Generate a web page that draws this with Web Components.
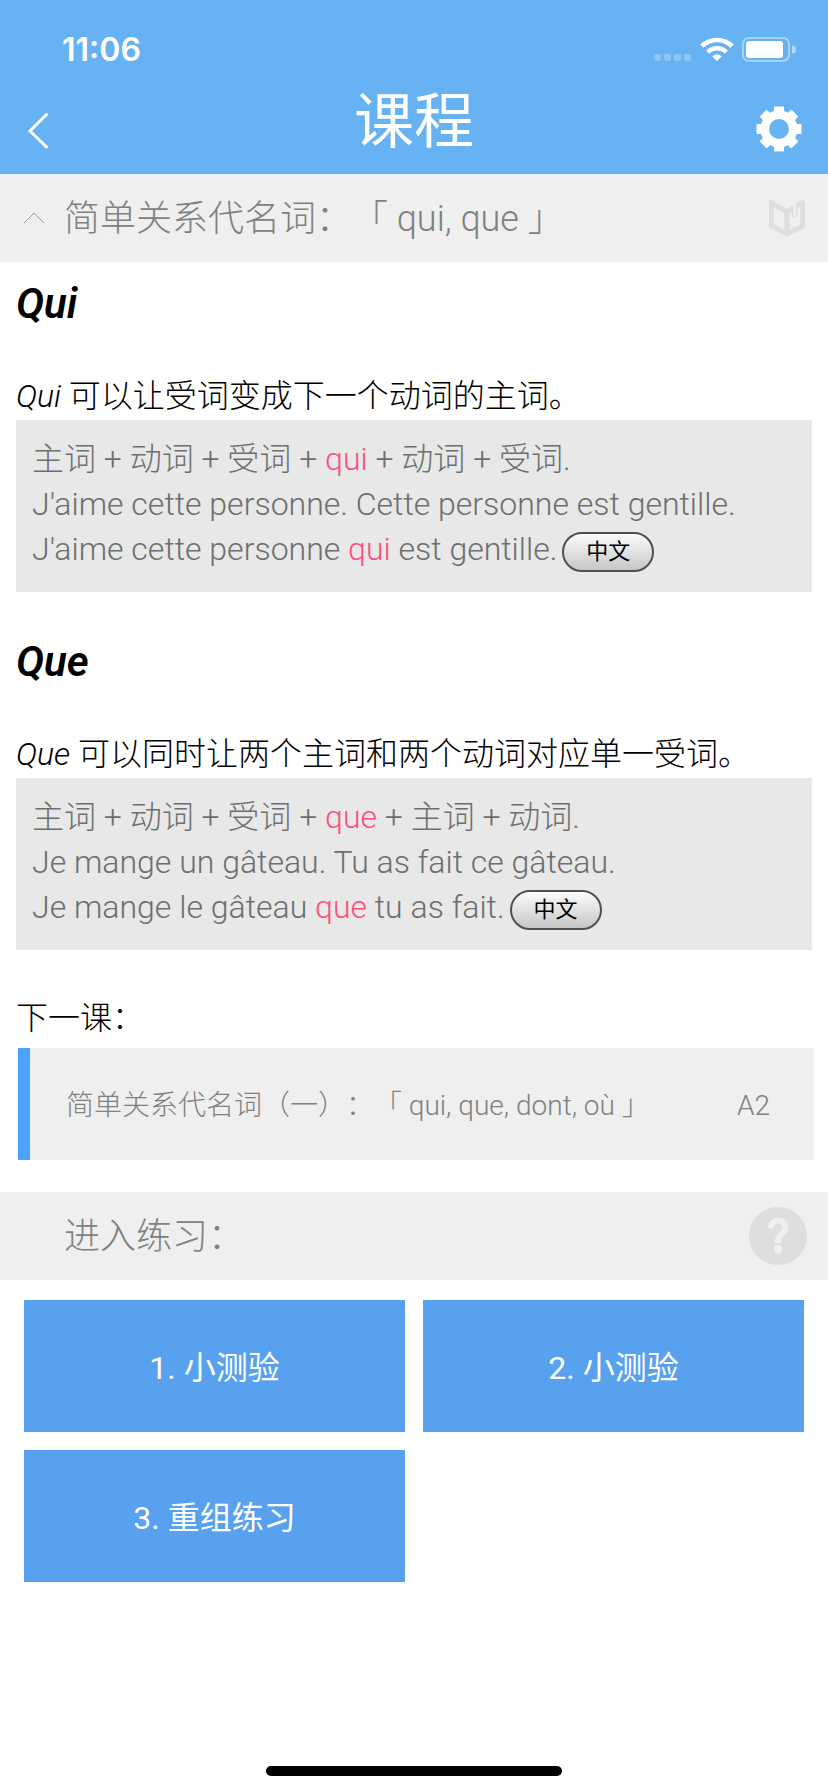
<!DOCTYPE html>
<html lang="zh-CN">
<head>
<meta charset="utf-8">
<meta name="viewport" content="width=device-width, initial-scale=1">
<title>课程</title>
<style>
  body {
    margin: 0;
    background: #fff;
    color: #000;
    font-family: Roboto, "Noto Sans CJK SC", sans-serif;
    font-weight: 300;
    font-size: 32px;
    text-spacing-trim: space-all;
  }
</style>
</head>
<body>
<lesson-app></lesson-app>

<script>
const define = (name, html) => {
  const template = document.createElement('template');
  template.innerHTML = html;
  customElements.define(name, class extends HTMLElement {
    constructor() {
      super();
      this.attachShadow({ mode: 'open' }).append(template.content.cloneNode(true));
    }
  });
};

define('status-bar', `
  <style>
    :host { display: flex; align-items: center; justify-content: space-between; height: 84px; padding: 14px 32px 0 62px; box-sizing: border-box; color: #fff; }
    time { padding-top: 2px; font: 600 32px/38px Inter, sans-serif; }
    .icons { display: flex; align-items: center; gap: 8px; }
    svg { display: block; }
  </style>
  <time>11:06</time>
  <div class="icons">
    <svg width="38" height="26" viewBox="0 0 38 26" fill="#fff" fill-opacity=".25" aria-hidden="true">
      <rect x="0" y="18" width="7" height="7" rx="2"/><rect x="10" y="18" width="7" height="7" rx="2"/>
      <rect x="20" y="18" width="7" height="7" rx="2"/><rect x="30" y="18" width="7" height="7" rx="2"/>
    </svg>
    <svg width="34" height="26" viewBox="0 0 34 26" fill="none" aria-hidden="true">
      <path d="M1.8 10.2C10.2 1.9 23.8 1.9 32.2 10.2" stroke="#fff" stroke-width="4.6"/>
      <path d="M7.7 16.1C13 11 21 11 26.3 16.1" stroke="#fff" stroke-width="4.4"/>
      <path d="M12.3 20.4C15 18 19 18 21.700 20.400L17 25Z" fill="#fff"/>
    </svg>
    <svg width="54" height="26" viewBox="0 0 54 26" aria-hidden="true">
      <rect x="1" y="2" width="46" height="23" rx="6" fill="none" stroke="#fff" stroke-opacity=".42" stroke-width="2"/>
      <rect x="4" y="5" width="37" height="17" rx="3" fill="#fff"/>
      <path d="M50 9.500a4 4 0 0 1 0 8Z" fill="#fff" fill-opacity=".5"/>
    </svg>
  </div>`);

define('nav-bar', `
  <style>
    :host { display: grid; grid-template-columns: 96px 1fr 96px; align-items: center; height: 90px; color: #fff; }
    h1 { margin: 0; padding-bottom: 12px; text-align: center; font-size: 60px; line-height: 72px; font-weight: 400; }
    button { border: 0; margin: 0; padding: 0; background: none; display: flex; height: 90px; align-items: center; }
    .back { padding-left: 24px; }
    .settings { justify-content: flex-end; padding-right: 24px; }
    svg { display: block; }
  </style>
  <button class="back" aria-label="返回">
    <svg width="28" height="40" viewBox="0 0 28 40" fill="none" stroke="#fff" stroke-width="3" stroke-linecap="round" stroke-linejoin="miter"><path d="M22.500 5.500L6 22L22.500 38"/></svg>
  </button>
  <h1><slot></slot></h1>
  <button class="settings" aria-label="设置">
    <svg width="50" height="50" viewBox="-25 -25 50 50">
      <path fill="none" stroke="#fff" stroke-width="8.500" d="M14.200 0A14.200 14.200 0 1 1 -14.200 0A14.200 14.200 0 1 1 14.200 0Z"/>
      <g fill="#fff" id="teeth"></g>
    </svg>
  </button>`);

define('section-bar', `
  <style>
    :host { display: flex; align-items: center; height: 88px; background: #efefef; color: #808080; }
    .lead { flex: none; width: 64px; display: flex; padding-left: 23px; box-sizing: border-box; }
    h2 { flex: 1; margin: 0; padding-top: 2px; font-size: 36px; line-height: 48px; font-weight: 300; white-space: nowrap; }
    .end { display: flex; }
  </style>
  <div class="lead"><slot name="lead"></slot></div>
  <h2><slot></slot></h2>
  <div class="end"><slot name="end"></slot></div>`);

define('icon-button', `
  <style>
    :host { display: block; }
    button { display: block; border: 0; margin: 0; padding: 0; background: none; }
    ::slotted(svg) { display: block; }
  </style>
  <button><slot></slot></button>`);

define('pill-button', `
  <style>
    :host { display: inline-block; margin-left: 5px; vertical-align: middle; line-height: 0; }
    button {
      box-sizing: border-box; width: 92px; height: 40px; margin: 0; padding: 0;
      border: 2px solid #505050; border-radius: 20px;
      background: linear-gradient(#fcfcfc, #c6c6c6); color: #000;
      font: 400 22px/36px Roboto, "Noto Sans CJK SC", sans-serif;
    }
  </style>
  <button><slot></slot></button>`);

define('grammar-rule', `
  <style>
    :host { display: block; padding: 0 16px; }
    h3 { margin: 0 0 44px; font-size: 42px; line-height: 48px; font-weight: 600; font-style: italic; }
    p { margin: 0; line-height: 48px; }
    .example { box-sizing: border-box; padding: 17px 16px 20px; background: #e8e8e8; color: #6e6e6e; line-height: 45px; }
  </style>
  <h3><slot name="title"></slot></h3>
  <p><slot name="rule"></slot></p>
  <div class="example"><slot></slot></div>`);

define('example-line', `
  <style>
    :host { display: block; height: 45px; white-space: nowrap; }
    ::slotted(b) { font-weight: 300; color: #ff4d79; }
  </style>
  <slot></slot>`);

define('next-lesson', `
  <style>
    :host { display: block; padding: 0 14px 0 16px; }
    p { margin: 0 0 6px; line-height: 48px; }
    a {
      display: flex; align-items: center; justify-content: space-between; box-sizing: border-box;
      height: 112px; margin-left: 2px; padding: 4px 44px 0 36px; border-left: 12px solid #4da3ff;
      background: #efefef; color: #808080; font-size: 28px; line-height: 36px; text-decoration: none; white-space: nowrap;
    }
  </style>
  <p><slot name="label"></slot></p>
  <a href="#next"><span><slot></slot></span><span><slot name="level"></slot></span></a>`);

define('exercise-grid', `
  <style>
    :host { display: grid; grid-template-columns: 1fr 1fr; gap: 18px; padding: 20px 24px; }
  </style>
  <slot></slot>`);

define('exercise-tile', `
  <style>
    :host { display: block; }
    button {
      display: block; width: 100%; height: 132px; margin: 0; padding: 4px 0 0; border: 0; background: #57a1ee; color: #fff;
      font: 400 32px/40px Roboto, "Noto Sans CJK SC", sans-serif;
    }
  </style>
  <button><slot></slot></button>`);

define('home-indicator', `
  <style>
    :host { display: flex; justify-content: center; padding-bottom: 16px; }
    div { width: 296px; height: 10px; border-radius: 5px; background: #000; }
  </style>
  <div></div>`);

define('lesson-app', `
  <style>
    :host { display: flex; flex-direction: column; min-height: 100vh; }
    header { background: #67b2f2; }
    .lesson { display: flex; flex-direction: column; gap: 46px; padding: 18px 0 32px; }
    next-lesson { margin-top: -2px; }
    .book { padding-right: 22px; }
    .help { padding-right: 20px; }
    home-indicator { margin-top: auto; }
  </style>
  <header>
    <status-bar></status-bar>
    <nav-bar>课程</nav-bar>
  </header>
  <main>
    <section-bar>
      <svg slot="lead" width="22" height="14" viewBox="0 0 22 14" fill="none" stroke="#999" stroke-width="1"><path d="M1 12L11 2L21 12"/></svg>
      简单关系代名词：「 qui, que 」
      <icon-button slot="end" class="book">
        <svg width="38" height="38" viewBox="0 0 38 38" role="img" aria-label="词典">
          <path fill="#dedede" fill-rule="evenodd" d="M1 3.500Q1 .2 4.200 1.300L19 10L33.800 1.300Q37 .2 37 3.500V27Q37 28.500 35.500 29.500L19 37.500L2.500 29.500Q1 28.500 1 27ZM5.700 7.700V25L16.300 31V14.300ZM21.700 14.300V31L32.300 25V7.700L29.500 9.300V15.500Q29.500 18.300 26.700 18.300Q24 18.300 24 15.500V12.800Z"/>
          <path fill="#efefef" d="M25.300 6H28.200V15.500Q28.200 17 26.700 17Q25.300 17 25.300 15.500Z"/>
        </svg>
      </icon-button>
    </section-bar>

    <div class="lesson">
      <grammar-rule>
        <span slot="title">Qui</span>
        <span slot="rule"><i>Qui</i> 可以让受词变成下一个动词的主词。</span>
        <example-line>主词 + 动词 + 受词 + <b>qui</b> + 动词 + 受词.</example-line>
        <example-line>J'aime cette personne. Cette personne est gentille.</example-line>
        <example-line>J'aime cette personne <b>qui</b> est gentille.<pill-button>中文</pill-button></example-line>
      </grammar-rule>

      <grammar-rule>
        <span slot="title">Que</span>
        <span slot="rule"><i>Que</i> 可以同时让两个主词和两个动词对应单一受词。</span>
        <example-line>主词 + 动词 + 受词 + <b>que</b> + 主词 + 动词.</example-line>
        <example-line>Je mange un gâteau. Tu as fait ce gâteau.</example-line>
        <example-line>Je mange le gâteau <b>que</b> tu as fait.<pill-button>中文</pill-button></example-line>
      </grammar-rule>

      <next-lesson>
        <span slot="label">下一课：</span>
        简单关系代名词（一）：「 qui, que, dont, où 」
        <span slot="level">A2</span>
      </next-lesson>
    </div>

    <section-bar>
      进入练习：
      <icon-button slot="end" class="help">
        <svg width="60" height="60" viewBox="0 0 60 60" role="img" aria-label="帮助">
          <circle cx="30" cy="30" r="29" fill="#dedede"/>
          <path d="M22.500 22.500C23 11.500 37.500 12.500 37.500 21.500C37.500 28 30 28 30 34.500V37" fill="none" stroke="#efefef" stroke-width="6"/>
          <circle cx="30" cy="43.300" r="4" fill="#efefef"/>
        </svg>
      </icon-button>
    </section-bar>

    <exercise-grid>
      <exercise-tile>1. 小测验</exercise-tile>
      <exercise-tile>2. 小测验</exercise-tile>
      <exercise-tile>3. 重组练习</exercise-tile>
    </exercise-grid>
  </main>
  <home-indicator></home-indicator>`);

/* The gear's eight teeth are one rounded bar, turned in steps of 45 degrees. */
const nav = document.querySelector('lesson-app').shadowRoot.querySelector('nav-bar');
nav.shadowRoot.getElementById('teeth').innerHTML = Array.from({ length: 8 }, (_, i) =>
  `<path transform="rotate(${i * 45})" d="M-5 -21.500Q-5 -22.500 -4 -22.500H4Q5 -22.500 5 -21.500V-17.500L8 -14H-8L-5 -17.500Z"/>`).join('');
</script>
</body>
</html>
